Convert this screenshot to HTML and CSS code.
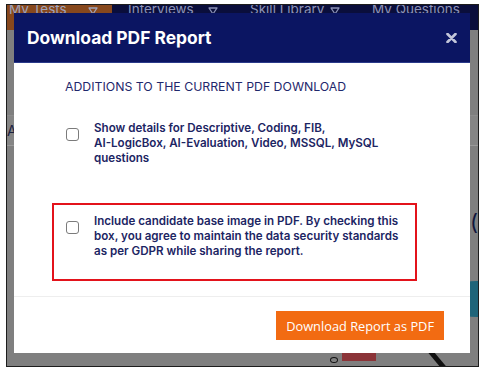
FILE: index.html
```html
<!DOCTYPE html>
<html lang="en">
<head>
    <meta charset="UTF-8">
    <meta name="viewport" content="width=device-width, initial-scale=1.0">
    <title>Download PDF Report</title>
    <link rel="stylesheet" href="styles.css">
</head>
<body>
    <div class="screen">
        <div class="page">
            <nav class="topnav">
                <span class="nav-item nav-active">My Tests <svg class="caret" width="10" height="8" viewBox="0 0 10 8"><path d="M1 1 H9 L5 7 Z" fill="none" stroke="#a1a5bd" stroke-width="1.3" stroke-linejoin="round"/></svg></span>
                <span class="nav-item">Interviews <svg class="caret" width="10" height="8" viewBox="0 0 10 8"><path d="M1 1 H9 L5 7 Z" fill="none" stroke="#8d93b8" stroke-width="1.3" stroke-linejoin="round"/></svg></span>
                <span class="nav-item">Skill Library <svg class="caret" width="10" height="8" viewBox="0 0 10 8"><path d="M1 1 H9 L5 7 Z" fill="none" stroke="#8d93b8" stroke-width="1.3" stroke-linejoin="round"/></svg></span>
                <span class="nav-item">My Questions</span>
            </nav>
            <div class="page-band">Ai</div>
            <div class="blob"></div>
            <div class="paren">(</div>
            <div class="red-tag"></div>
            <div class="ring"></div>
            <div class="slash"></div>
        </div>

        <div class="modal">
            <div class="modal-header">
                <h2>Download PDF Report</h2>
                <span class="close">
                    <svg width="11" height="10" viewBox="0 0 11 10">
                        <path d="M1.5 1 L9.5 9 M9.5 1 L1.5 9" stroke="#c3c6da" stroke-width="2.6" stroke-linecap="round"/>
                    </svg>
                </span>
            </div>
            <div class="modal-body">
                <p class="section-title">ADDITIONS TO THE CURRENT PDF DOWNLOAD</p>
                <label class="option">
                    <span class="check"></span>
                    <span class="option-text">Show details for Descriptive, Coding, FIB,<br>AI-LogicBox, AI-Evaluation, Video, MSSQL, MySQL<br>questions</span>
                </label>
                <label class="option option-highlight">
                    <span class="check"></span>
                    <span class="option-text">Include candidate base image in PDF. By checking this<br>box, you agree to maintain the data security standards<br>as per GDPR while sharing the report.</span>
                </label>
            </div>
            <div class="modal-footer">
                <button class="btn-download">Download Report as PDF</button>
            </div>
        </div>
    </div>
</body>
</html>
```

FILE: styles.css
```css
body {
    margin: 0;
    background: #fff;
    font-family: Inter, 'Noto Sans', sans-serif;
}
.screen {
    position: relative;
    width: 471px;
    height: 361px;
    margin: 4px 0 0 6px;
    border: 1px solid #1d1d1d;
    background: #7f7f7f;
    overflow: hidden;
}
.page {
    height: 100%;
}
.topnav {
    display: flex;
    height: 28px;
    margin-top: -3px;
    background: #0a0e3b;
    color: #8d93b8;
    font-size: 13.5px;
    line-height: 14px;
}
.nav-item {
    display: flex;
    justify-content: space-between;
    width: 94px;
    padding: 0 16px;
    white-space: nowrap;
}
.nav-active {
    width: 93px;
    padding: 0 14px 0 2px;
    background: #87481d;
    color: #a1a5bd;
}
.caret {
    flex: none;
    margin-top: 5px;
}
.page-band {
    margin-top: 85px;
    height: 29px;
    border-top: 1px solid #8c8c8c;
    border-bottom: 1px solid #9a9a9a;
    background: #858585;
    color: #1c2140;
    font-size: 14px;
    line-height: 29px;
}
.blob {
    position: absolute;
    left: 440px;
    top: 276px;
    width: 60px;
    height: 36px;
    border-radius: 50%;
    background: #1f6479;
}
.paren {
    position: absolute;
    left: 463px;
    top: 204px;
    color: #10163c;
    font-size: 22px;
}
.red-tag {
    position: absolute;
    left: 335px;
    top: 345px;
    width: 34px;
    height: 11px;
    background: #8b3438;
}
.ring {
    position: absolute;
    left: 323px;
    top: 352px;
    width: 6px;
    height: 4px;
    border: 1.5px solid #111;
    border-radius: 50%;
}
.slash {
    position: absolute;
    left: 428px;
    top: 340px;
    width: 5px;
    height: 30px;
    background: #111;
    transform: rotate(-40deg);
}

.modal {
    position: absolute;
    left: 7px;
    top: 8px;
    width: 456px;
    height: 340px;
    background: #fff;
    display: flex;
    flex-direction: column;
}
.modal-header {
    display: flex;
    align-items: center;
    justify-content: space-between;
    height: 49px;
    padding: 0 12px 0 13px;
    background: #0b1562;
    border-bottom: 1px solid #2a3a8a;
}
.modal-header h2 {
    margin: 0;
    color: #fff;
    font-size: 17.4px;
    font-weight: 700;
}
.close {
    display: flex;
    padding-right: 1px;
}
.modal-body {
    flex: 1;
    padding: 16px 20px 0 38px;
    border-bottom: 1px solid #eeeeee;
}
.section-title {
    margin: 0 0 15px 13px;
    color: #1f286c;
    font-size: 12.3px;
    line-height: 16px;
}
.option {
    display: flex;
    gap: 15px;
    width: 337px;
    padding: 9px 12px 17px 12px;
    border: 2px solid transparent;
    color: #1c2563;
    font-size: 11.6px;
    font-weight: 600;
    line-height: 15px;
    cursor: pointer;
}
.option + .option {
    margin-top: 18px;
    padding-bottom: 20px;
}
.option-highlight {
    border-color: #e3131b;
}
.check {
    flex: none;
    width: 11px;
    height: 11px;
    margin-top: 7px;
    border: 1.5px solid #7b7b7b;
    border-radius: 3px;
    background: #fff;
}
.option-text {
    white-space: nowrap;
}
.modal-footer {
    display: flex;
    justify-content: flex-end;
    padding: 14px 26px 0 0;
    height: 42px;
}
.btn-download {
    height: 29px;
    padding: 0 10px;
    border: none;
    background: #f26b12;
    color: #fff;
    font-family: 'Open Sans', sans-serif;
    font-size: 12.8px;
    cursor: pointer;
}
```
